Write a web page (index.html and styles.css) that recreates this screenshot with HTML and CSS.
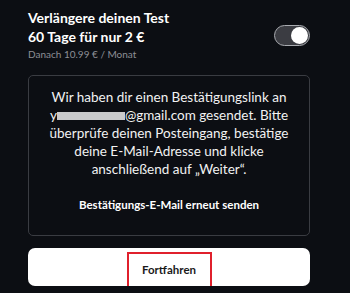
FILE: index.html
```html
<!DOCTYPE html>
<html lang="de">
<head>
    <meta charset="UTF-8">
    <meta name="viewport" content="width=device-width, initial-scale=1.0">
    <title>Test verlängern</title>
    <link rel="stylesheet" href="styles.css">
</head>
<body>
    <div class="screen">
        <div class="offer">
            <div class="offer-text">
                <div class="offer-title">Verlängere deinen Test</div>
                <div class="offer-title">60 Tage für nur 2 €</div>
                <div class="offer-sub">Danach 10.99 € / Monat</div>
            </div>
            <div class="toggle"><span class="knob"></span></div>
        </div>

        <div class="confirm-card">
            <p class="confirm-text">Wir haben dir einen Bestätigungslink an <span class="mail">y<span class="blur"></span>@gmail.com</span> gesendet. Bitte überprüfe deinen Posteingang, bestätige deine E-Mail-Adresse und klicke anschließend auf „Weiter“.</p>
            <a class="resend" href="#">Bestätigungs-E-Mail erneut senden</a>
        </div>

        <button class="continue"><span class="highlight">Fortfahren</span></button>
    </div>
</body>
</html>
```

FILE: styles.css
```css
/* Grundlayout - dunkler Hintergrund */
body {
    margin: 0;
    padding: 0;
    background-color: #0c0e13;
    color: #ffffff;
    font-family: Lato, "Noto Sans", Arial, sans-serif;
    -webkit-font-smoothing: antialiased;
}

.screen {
    width: 282px;
    padding: 8px 0 0 28px;
    display: flex;
    flex-direction: column;
}

/* Angebot oben mit Schalter */
.offer {
    display: flex;
    justify-content: space-between;
    align-items: flex-start;
}
.offer-title {
    font-size: 14px;
    font-weight: 700;
    line-height: 19px;
}
.offer-sub {
    font-size: 10px;
    color: #8d8f96;
    margin-top: 2px;
}
.toggle {
    width: 32px;
    height: 19px;
    margin: 17px 0 0 0;
    border: 1.5px solid #a9abb0;
    border-radius: 11px;
    background-color: #3b3c42;
    display: flex;
    align-items: center;
    justify-content: flex-end;
    padding: 0 1px;
    box-sizing: content-box;
}
.toggle .knob {
    width: 17px;
    height: 17px;
    border-radius: 50%;
    background-color: #ffffff;
}

/* Hinweis-Karte */
.confirm-card {
    margin-top: 15px;
    border: 1px solid #3a3c42;
    border-radius: 5px;
    padding: 12px 8px 24px;
    text-align: center;
}
.confirm-text {
    margin: 0;
    font-size: 13.5px;
    line-height: 18px;
    color: #f2f2f2;
}
.mail {
    white-space: nowrap;
}
.mail .blur {
    display: inline-block;
    width: 68px;
    height: 8px;
    background-color: #c9c9cb;
}
.resend {
    display: block;
    margin-top: 20px;
    font-size: 11.5px;
    font-weight: 700;
    color: #ffffff;
    text-decoration: none;
}

/* Weiter-Button */
.continue {
    margin-top: 12px;
    height: 38px;
    border: none;
    border-radius: 7px;
    background-color: #ffffff;
    font-family: inherit;
    display: flex;
    justify-content: center;
    align-items: center;
}
.continue .highlight {
    border: 2px solid #e0202c;
    width: 81px;
    height: 32px;
    margin-top: 5px;
    display: flex;
    align-items: center;
    justify-content: center;
    font-size: 11.5px;
    font-weight: 700;
    color: #1a1a1a;
}
```
